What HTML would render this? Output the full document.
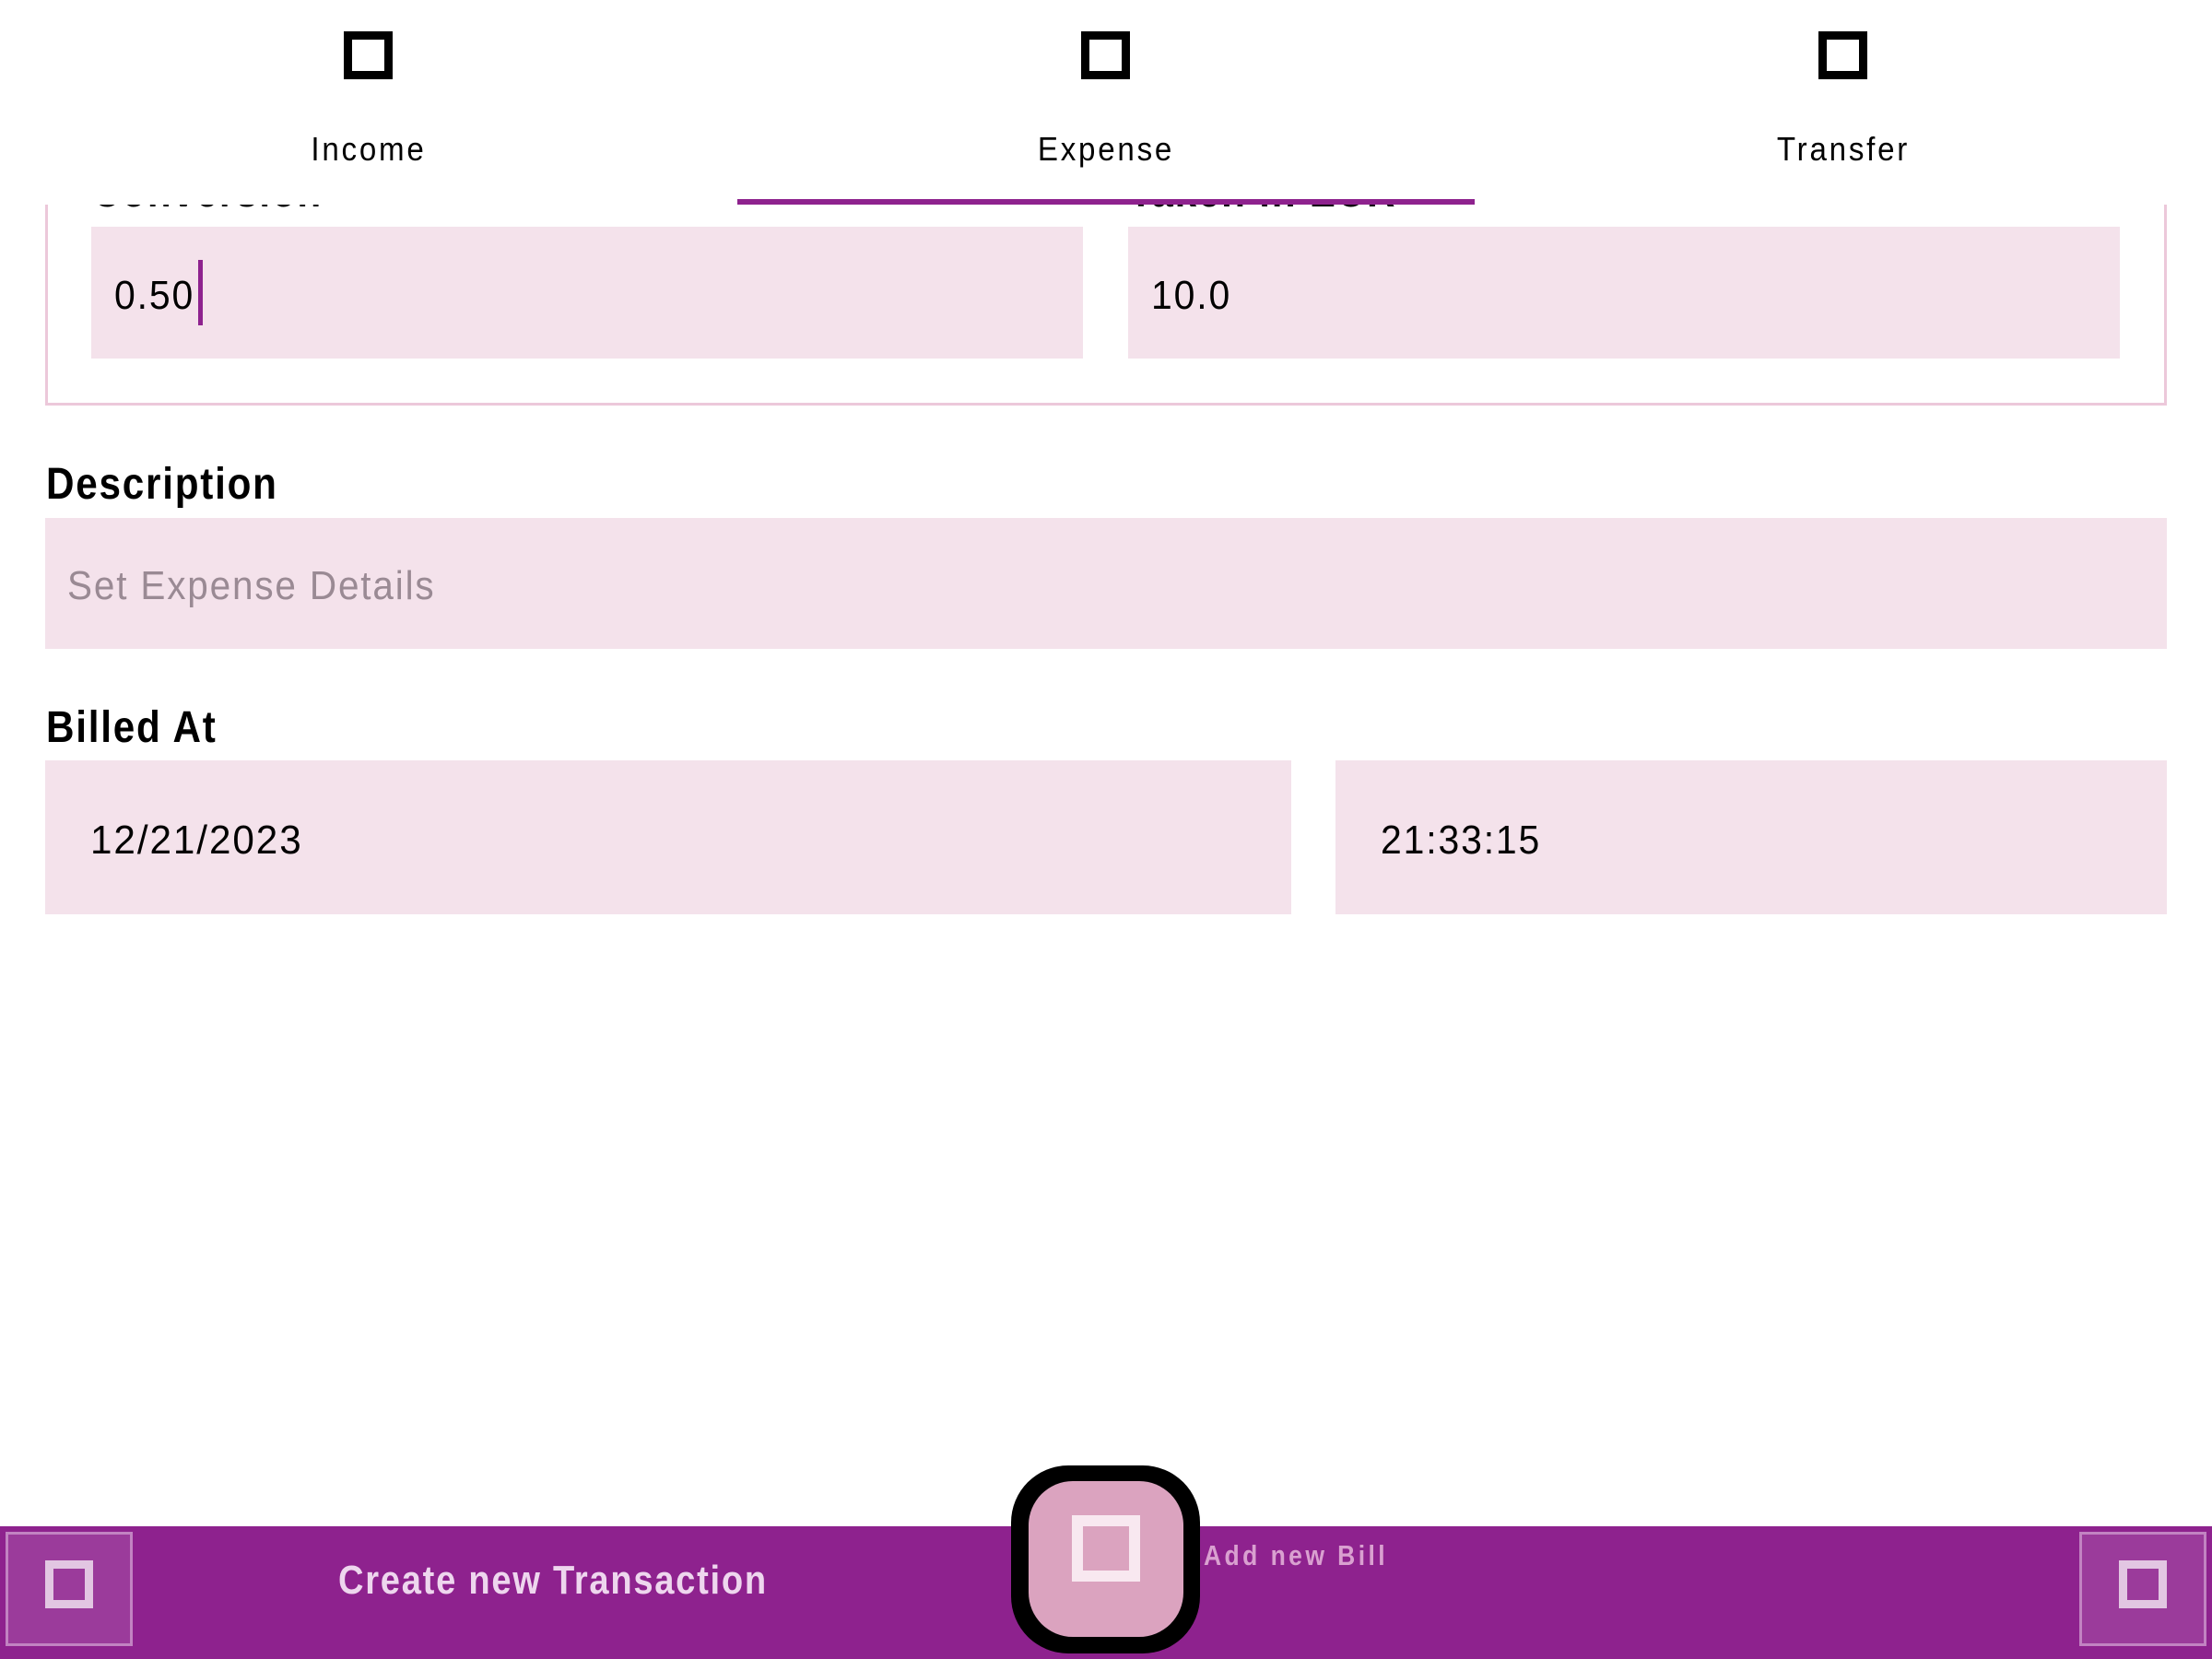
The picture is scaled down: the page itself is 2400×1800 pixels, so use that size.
<!DOCTYPE html>
<html><head><meta charset="utf-8"><style>
*{margin:0;padding:0;box-sizing:border-box}
body{width:2400px;height:1800px;overflow:hidden;background:#fff;position:relative;font-family:"Liberation Sans",sans-serif;color:#000}
.a{position:absolute}
.sq{position:absolute;border-style:solid}
.in{position:absolute;background:#f4e2eb;display:flex;align-items:center;font-size:44px;letter-spacing:2px;padding-top:6px}
.lbl{position:absolute;font-weight:bold;font-size:48px;letter-spacing:2px;line-height:1;transform:scaleX(0.88);transform-origin:left}
.tab{position:absolute;top:142px;font-size:36px;letter-spacing:3px;width:800px;text-align:center;line-height:40px;transform:scaleX(0.92)}
.c{display:inline-block;transform-origin:left}
</style></head><body>
<div class="a" style="left:49px;top:150px;width:2302px;height:290px;border:3px solid #ecc8da;border-top:none"></div>
<div class="lbl" style="left:100px;top:185px">Conversion</div>
<div class="lbl" style="left:1225px;top:185px">Taken in EUR</div>
<div class="in" style="left:99px;top:246px;width:1076px;height:143px;padding-left:25px"><span class="c" style="transform:scaleX(0.93)">0.50</span><span style="display:inline-block;width:5px;height:71px;background:#8e228e;margin-left:-3px;margin-top:-6px"></span></div>
<div class="in" style="left:1224px;top:246px;width:1076px;height:143px;padding-left:25px"><span class="c" style="transform:scaleX(0.93)">10.0</span></div>
<div class="a" style="left:0;top:0;width:2400px;height:222px;background:#fff"></div>
<div class="sq" style="left:373px;top:34px;width:53px;height:52px;border-width:9px;border-color:#000"></div>
<div class="sq" style="left:1173px;top:34px;width:53px;height:52px;border-width:9px;border-color:#000"></div>
<div class="sq" style="left:1973px;top:34px;width:53px;height:52px;border-width:9px;border-color:#000"></div>
<div class="tab" style="left:0">Income</div>
<div class="tab" style="left:800px">Expense</div>
<div class="tab" style="left:1600px">Transfer</div>
<div class="a" style="left:800px;top:216px;width:800px;height:6px;background:#8e228e"></div>
<div class="lbl" style="left:50px;top:502px">Description</div>
<div class="in" style="left:49px;top:562px;width:2302px;height:142px;padding-left:24px;color:#9a8a94"><span class="c" style="transform:scaleX(0.92)">Set Expense Details</span></div>
<div class="lbl" style="left:50px;top:766px">Billed At</div>
<div class="in" style="left:49px;top:825px;width:1352px;height:167px;padding-left:49px"><span class="c" style="transform:scaleX(0.96)">12/21/2023</span></div>
<div class="in" style="left:1449px;top:825px;width:902px;height:167px;padding-left:49px"><span class="c" style="transform:scaleX(0.93)">21:33:15</span></div>
<div class="a" style="left:0;top:1656px;width:2400px;height:144px;background:#8e228e"></div>
<div class="a" style="left:6px;top:1662px;width:138px;height:124px;background:#9b3b9b;border:3px solid #c283c2"></div>
<div class="sq" style="left:49px;top:1693px;width:52px;height:52px;border-width:9px;border-color:#e2c6e2"></div>
<div class="a" style="left:2256px;top:1662px;width:138px;height:124px;background:#9b3b9b;border:3px solid #c283c2"></div>
<div class="sq" style="left:2299px;top:1693px;width:52px;height:52px;border-width:9px;border-color:#e2c6e2"></div>
<div class="a" style="left:367px;top:1690px;font-size:44px;font-weight:bold;color:#eed6ee;letter-spacing:2px;line-height:50px;transform:scaleX(0.866);transform-origin:left">Create new Transaction</div>
<div class="a" style="left:1097px;top:1590px;width:205px;height:204px;background:#000;border-radius:62px"></div>
<div class="a" style="left:1116px;top:1607px;width:168px;height:169px;background:#dba3bf;border-radius:48px"></div>
<div class="sq" style="left:1163px;top:1644px;width:74px;height:72px;border-width:12px;border-color:#f8e8f0"></div>
<div class="a" style="left:1306px;top:1670px;font-size:31px;font-weight:bold;color:#d9a0d0;letter-spacing:4px;line-height:36px;transform:scaleX(0.855);transform-origin:left">Add new Bill</div>
</body></html>
